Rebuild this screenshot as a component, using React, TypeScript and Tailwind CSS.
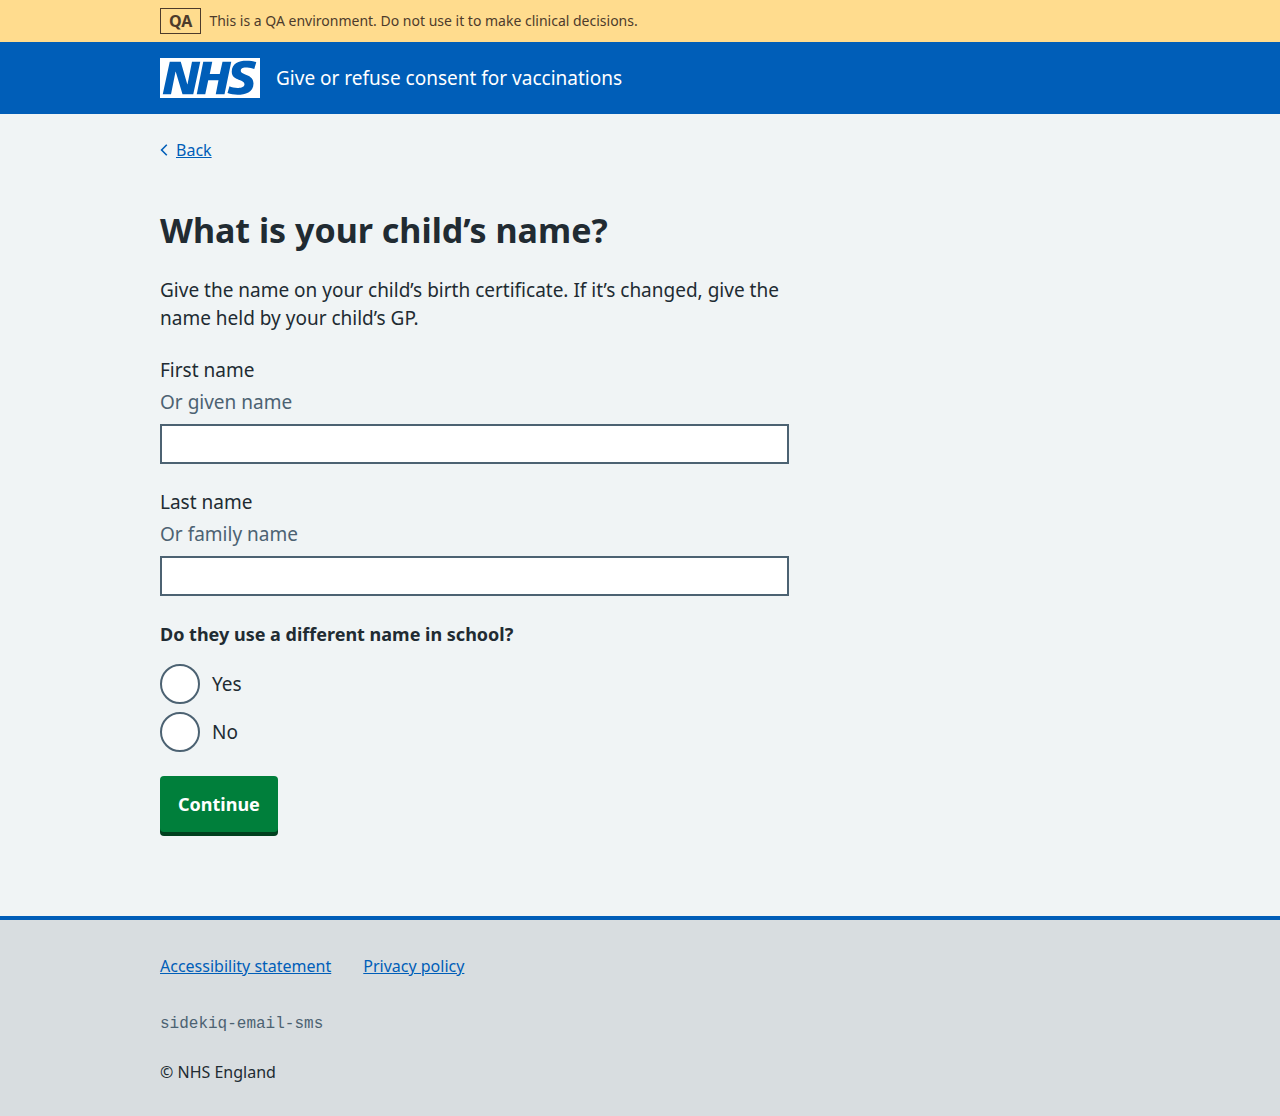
import type { ReactNode } from "react";

function Container({ children, className = "" }: { children: ReactNode; className?: string }) {
  return <div className={`mx-4 max-w-[960px] lg:mx-auto ${className}`}>{children}</div>;
}

function NhsLogo() {
  return (
    <svg className="h-10 w-[100px] shrink-0 text-white" viewBox="0 0 200 80" role="img" aria-label="NHS">
      <path
        fill="currentColor"
        d="M200 0v80H0V0h200Zm-27.5 5.5c-14.5 0-29 5-29 22 0 10.2 7.7 13.5 14.7 16.3l.7.3c5.4 2 10.1 3.9 10.1 8.4 0 6.5-8.5 7.5-14 7.5s-12.5-1.5-16-3.5L135 70c5.5 2 13.5 3.5 20 3.5 15.5 0 32-4.5 32-22.5 0-19.5-25.5-16.5-25.5-25.5 0-5.5 5.5-6.5 12.5-6.5a35 35 0 0 1 14.5 3l4-13.5c-4.5-2-12-3-20-3Zm-131 2h-22l-14 65H22l9-45h.5l13.5 45h21.5l14-65H64l-9 45h-.5l-13-45Zm63 0h-18l-13 65h17l6-28H117l-5.5 28H129l13.5-65H125L119.5 32h-20l5-24.5Z"
      />
    </svg>
  );
}

function TextField({ id, label, hint }: { id: string; label: string; hint: string }) {
  return (
    <div className="mb-6">
      <label htmlFor={id} className="mb-1 block">
        {label}
      </label>
      <div id={`${id}-hint`} className="mb-2 text-[#4c6272]">
        {hint}
      </div>
      <input
        id={id}
        type="text"
        aria-describedby={`${id}-hint`}
        className="block h-10 w-full border-2 border-[#4c6272] bg-white px-1"
      />
    </div>
  );
}

function Radio({ id, label }: { id: string; label: string }) {
  return (
    <div className="flex items-center gap-3">
      <input
        id={id}
        type="radio"
        name="different-name"
        className="size-10 shrink-0 appearance-none rounded-full border-2 border-[#4c6272] bg-white checked:bg-[radial-gradient(#212b32_10px,white_11px)]"
      />
      <label htmlFor={id}>{label}</label>
    </div>
  );
}

export default function App() {
  return (
    <div className="flex min-h-screen flex-col bg-[#f0f4f5] font-['Noto_Sans','Open_Sans',sans-serif] text-[19px]/7 text-[#212b32]">
      <div className="bg-[#ffdc8e] py-2 text-[#4d3b2b]">
        <Container className="flex items-center gap-2">
          <strong className="border border-current px-2 text-base/6 font-bold">QA</strong>
          <span className="text-sm/6">This is a QA environment. Do not use it to make clinical decisions.</span>
        </Container>
      </div>

      <header className="bg-[#005eb8] py-4 text-white">
        <Container>
          <a href="#" className="flex items-center gap-4">
            <NhsLogo />
            <span>Give or refuse consent for vaccinations</span>
          </a>
        </Container>
      </header>

      <div className="grow">
        <Container className="pt-6 pb-20">
          <a href="#" className="flex w-fit items-center gap-2 text-base/6 text-[#005eb8]">
            <svg className="h-3 w-2" viewBox="0 0 8 12" fill="none" stroke="currentColor" strokeWidth="1.6" aria-hidden="true">
              <path d="M6.8.8 1.6 6l5.2 5.2" />
            </svg>
            <span className="underline">Back</span>
          </a>

          <main className="grid pt-[46px] md:grid-cols-3 md:gap-8">
            <form className="md:col-span-2" onSubmit={(e) => e.preventDefault()}>
              <h1 className="mb-6 text-[34px]/11 font-bold">What is your child’s name?</h1>
              <p className="mb-6">
                Give the name on your child’s birth certificate. If it’s changed, give the name held by your child’s GP.
              </p>
              <TextField id="first-name" label="First name" hint="Or given name" />
              <TextField id="last-name" label="Last name" hint="Or family name" />
              <fieldset className="mb-6">
                <legend className="mb-4 text-lg/7 font-bold">Do they use a different name in school?</legend>
                <div className="flex flex-col gap-2">
                  <Radio id="different-name-yes" label="Yes" />
                  <Radio id="different-name-no" label="No" />
                </div>
              </fieldset>
              <button
                type="submit"
                className="block rounded bg-[#007f3b] px-[18px] py-3.5 text-lg/7 font-bold text-white shadow-[0_4px_0_#00401e]"
              >
                Continue
              </button>
            </form>
          </main>
        </Container>
      </div>

      <footer className="border-t-4 border-[#005eb8] bg-[#d8dde0] text-base/6">
        <Container className="pt-[34px] pb-8">
          <ul className="mb-[34px] flex flex-wrap gap-x-8 gap-y-2 text-[#005eb8]">
            <li>
              <a href="#" className="underline">Accessibility statement</a>
            </li>
            <li>
              <a href="#" className="underline">Privacy policy</a>
            </li>
          </ul>
          <p className="mb-6 font-['Liberation_Mono',monospace] text-[#4c6272]">sidekiq-email-sms</p>
          <p>© NHS England</p>
        </Container>
      </footer>
    </div>
  );
}
